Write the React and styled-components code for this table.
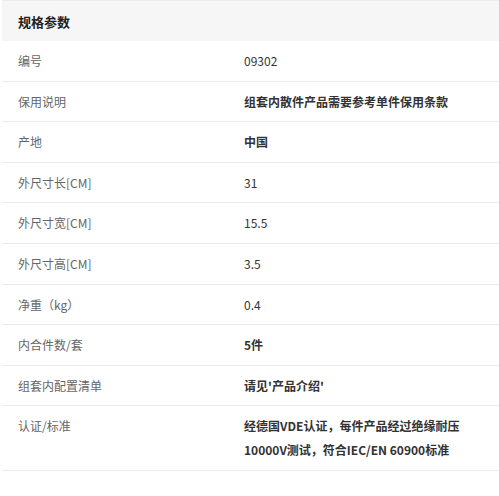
import React from "react";
import styled, { createGlobalStyle } from "styled-components";

const GlobalStyle = createGlobalStyle`
  html, body {
    margin: 0;
    padding: 0;
    background: #fff;
  }
  body {
    font-family: "Noto Sans CJK SC", sans-serif;
  }
`;

const Wrapper = styled.div`
  margin-left: 2px;
  width: 497px;
  border-top: 1px solid #ededed;
`;

const Header = styled.div`
  height: 40px;
  display: flex;
  align-items: center;
  padding-left: 16px;
  background: #f6f6f6;
  font-size: 13px;
  font-weight: 700;
  color: #222;
`;

const Row = styled.div`
  display: grid;
  grid-template-columns: 226px 1fr;
  padding: 8px 20px 7.6px 16px;
  border-bottom: 1px solid #ebebeb;
  font-size: 12px;
  line-height: 24px;
`;

const Label = styled.div`
  color: #666;
`;

const Value = styled.div`
  color: #333;
  font-weight: ${(props) => (props.bold ? 700 : 400)};
`;

const specs = [
  { label: "编号", value: "09302" },
  { label: "保用说明", value: "组套内散件产品需要参考单件保用条款", bold: true },
  { label: "产地", value: "中国", bold: true },
  { label: "外尺寸长[CM]", value: "31" },
  { label: "外尺寸宽[CM]", value: "15.5" },
  { label: "外尺寸高[CM]", value: "3.5" },
  { label: "净重（kg）", value: "0.4" },
  { label: "内合件数/套", value: "5件", bold: true },
  { label: "组套内配置清单", value: "请见'产品介绍'", bold: true },
  {
    label: "认证/标准",
    value: "经德国VDE认证，每件产品经过绝缘耐压10000V测试，符合IEC/EN 60900标准",
    bold: true,
  },
];

function App() {
  return (
    <>
      <GlobalStyle />
      <Wrapper>
        <Header>规格参数</Header>
        {specs.map((item) => (
          <Row key={item.label}>
            <Label>{item.label}</Label>
            <Value bold={item.bold}>{item.value}</Value>
          </Row>
        ))}
      </Wrapper>
    </>
  );
}

export default App;
